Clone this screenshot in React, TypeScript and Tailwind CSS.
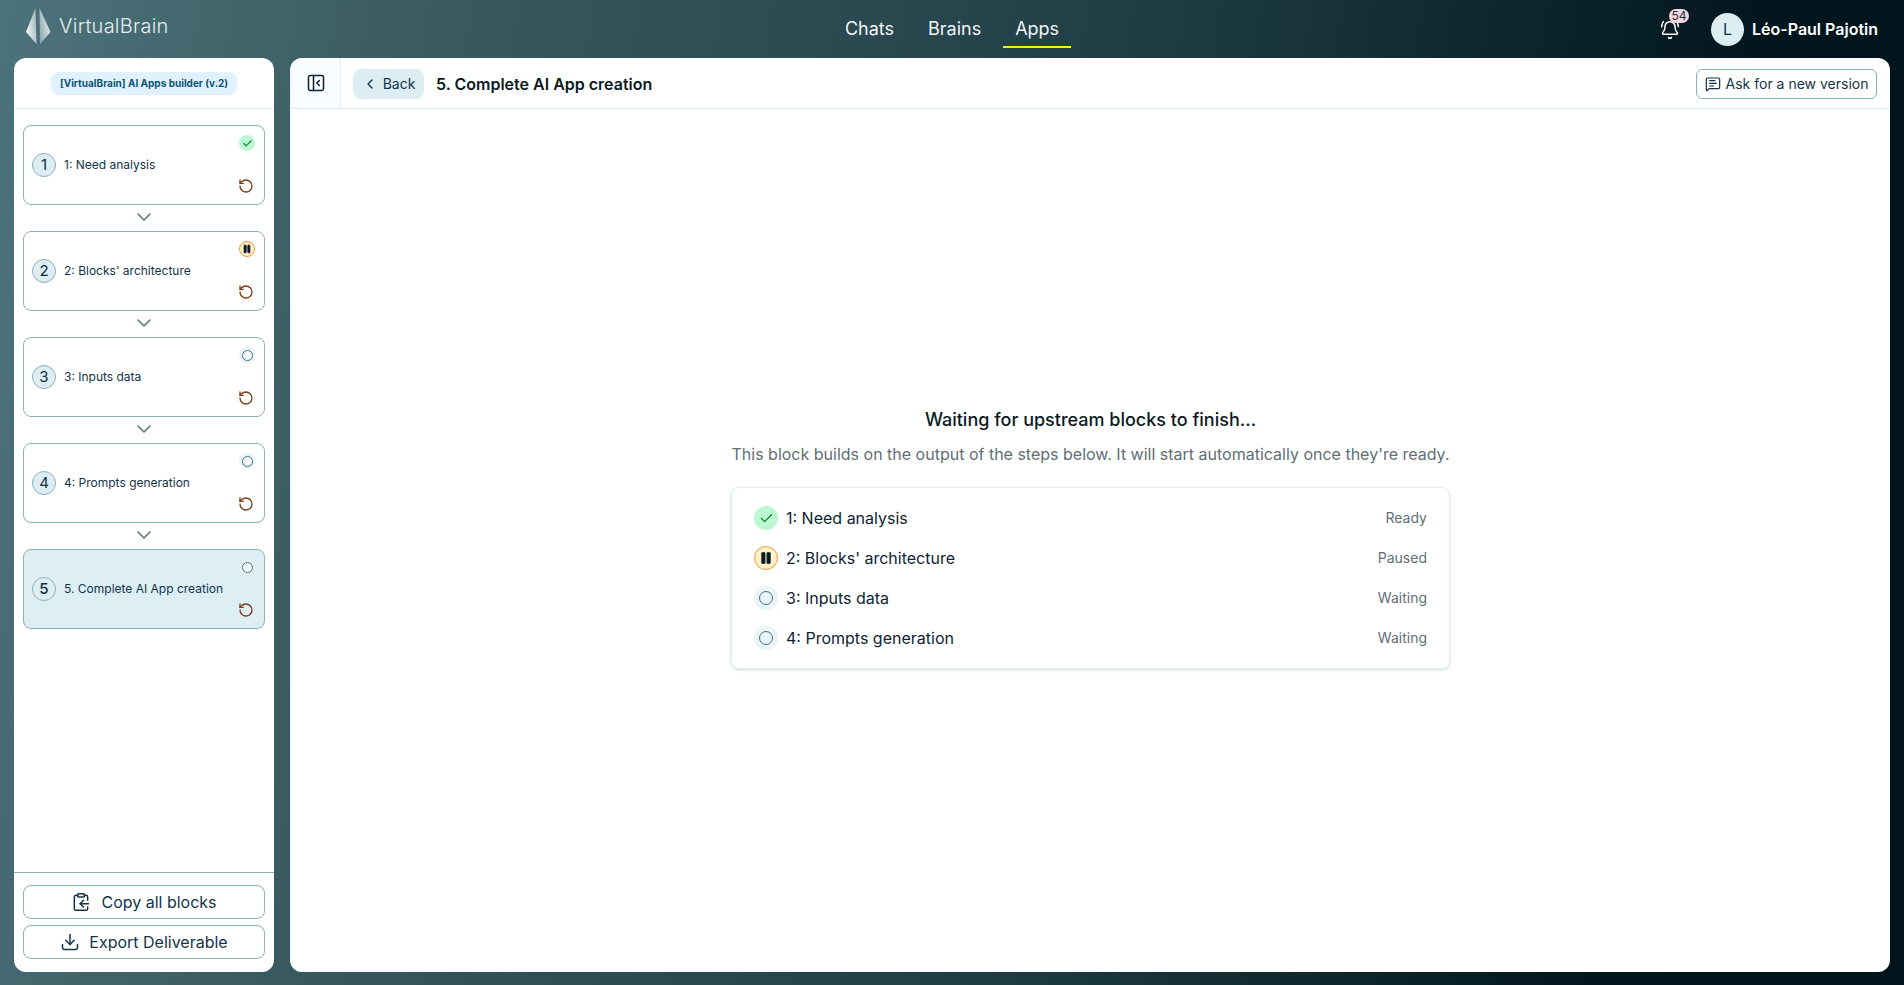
import React from "react";
import {
  BellRing,
  Check,
  ChevronDown,
  ChevronLeft,
  ClipboardCopy,
  Download,
  MessageSquareText,
  PanelLeftClose,
  Pause,
  RotateCcw,
} from "lucide-react";

type Status = "ready" | "paused" | "waiting";

const steps: { n: number; label: string; status: Status; state: string }[] = [
  { n: 1, label: "1: Need analysis", status: "ready", state: "Ready" },
  { n: 2, label: "2: Blocks' architecture", status: "paused", state: "Paused" },
  { n: 3, label: "3: Inputs data", status: "waiting", state: "Waiting" },
  { n: 4, label: "4: Prompts generation", status: "waiting", state: "Waiting" },
];

const StatusSmall = ({ status }: { status: Status }) => {
  if (status === "ready")
    return (
      <div className="w-4 h-4 rounded-full bg-[#bbf7d0] flex items-center justify-center">
        <Check size={11} strokeWidth={2.5} className="text-[#15803d]" />
      </div>
    );
  if (status === "paused")
    return (
      <div className="w-4 h-4 rounded-full bg-[#fef3c7] border border-[#fb923c] flex items-center justify-center">
        <Pause size={10} strokeWidth={2} fill="currentColor" className="text-[#111827]" />
      </div>
    );
  return (
    <div className="w-4 h-4 rounded-full bg-[#e6f2f7] flex items-center justify-center">
      <div className="w-[11px] h-[11px] rounded-full border border-[#47727f] bg-white/60" />
    </div>
  );
};

const StatusLarge = ({ status }: { status: Status }) => {
  if (status === "ready")
    return (
      <div className="w-6 h-6 rounded-full bg-[#bbf7d0] flex items-center justify-center">
        <Check size={15} strokeWidth={2} className="text-[#15803d]" />
      </div>
    );
  if (status === "paused")
    return (
      <div className="w-6 h-6 rounded-full bg-[#fef3c7] border-[1.5px] border-[#fb923c] flex items-center justify-center">
        <Pause size={14} strokeWidth={2} fill="currentColor" className="text-[#0b1a22]" />
      </div>
    );
  return (
    <div className="w-6 h-6 rounded-full bg-[#eaf5fa] flex items-center justify-center">
      <div className="w-[14px] h-[14px] rounded-full border-[1.5px] border-[#47727f]" />
    </div>
  );
};

const StepCard = ({
  n,
  label,
  status,
  active,
}: {
  n: number;
  label: string;
  status: Status;
  active?: boolean;
}) => (
  <div
    className={
      "h-20 rounded-lg border border-[#8fb0b8] flex items-center justify-between pl-2 pr-[9px] " +
      (active ? "bg-[#deeef5]" : "bg-white")
    }
  >
    <div className="flex items-center gap-2">
      <div
        className={
          "w-6 h-6 rounded-full border border-[#8fb0b8] flex items-center justify-center text-[15px] text-[#0d2c3d] " +
          (active ? "font-medium" : "bg-[#ddedf4]")
        }
      >
        {n}
      </div>
      <span className="text-xs text-[#12344a]">{label}</span>
    </div>
    <div className="h-full flex flex-col justify-between items-end pt-[9px] pb-[10px]">
      <StatusSmall status={status} />
      <RotateCcw size={16} strokeWidth={2} className="text-[#7a3e1c] mr-[1px]" />
    </div>
  </div>
);

const Logo = () => (
  <svg width="25" height="36" viewBox="0 0 25 36" fill="none">
    <defs>
      <linearGradient id="shardA" x1="0" y1="0.6" x2="1" y2="0.2">
        <stop offset="0" stopColor="#f6f9f9" />
        <stop offset="1" stopColor="#9db4ba" />
      </linearGradient>
      <linearGradient id="shardB" x1="1" y1="0.2" x2="0" y2="0.7">
        <stop offset="0" stopColor="#f0f4f5" />
        <stop offset="1" stopColor="#8ea9b0" />
      </linearGradient>
    </defs>
    <path d="M9.5 0 L0 24 L10.5 36 Z" fill="url(#shardA)" />
    <path d="M13.5 0 L24.5 24 L14 36 Z" fill="url(#shardB)" />
  </svg>
);

export default function App() {
  return (
    <div className="h-[985px] w-full overflow-hidden flex flex-col bg-[linear-gradient(100deg,#4d737a_0%,#3a5b62_20%,#1f3d45_55%,#02161e_85%,#02141c_100%)] font-['Inter',sans-serif]">
      <header className="h-[58px] shrink-0 grid grid-cols-[1fr_auto_1fr] items-stretch pl-[26px] pr-[26px]">
        <div className="flex items-center gap-2 pb-[6px]">
          <Logo />
          <span className="text-[20px] font-light tracking-[0.25px] text-[#e6edef]">VirtualBrain</span>
        </div>
        <nav className="flex gap-[10px] items-stretch text-lg text-[#f1f5f6]">
          <a className="px-3 pt-[15px]">Chats</a>
          <a className="px-3 pt-[15px]">Brains</a>
          <a className="px-3 pt-[15px] h-[48px] border-b-2 border-[#fdec2e]">Apps</a>
        </nav>
        <div className="flex items-center justify-end gap-2">
          <div className="relative mr-[23px] mt-[1px]">
            <BellRing size={20} strokeWidth={1.8} className="text-white" />
            <span className="absolute -top-[11px] left-[9px] w-5 h-[14px] rounded-full bg-[#fbd5d8] text-xs leading-[14px] text-center text-[#12344a]">
              54
            </span>
          </div>
          <div className="w-[33px] h-[33px] rounded-full bg-[#ddedf4] flex items-center justify-center text-base text-[#12344a]">
            L
          </div>
          <span className="text-base font-semibold text-white">Léo-Paul Pajotin</span>
        </div>
      </header>

      <div className="flex-1 min-h-0 flex gap-4 pl-[14px] pr-[14px] pb-[13px]">
        <aside className="w-[260px] shrink-0 bg-white rounded-xl flex flex-col">
          <div className="h-[51px] shrink-0 border-b border-[#ddedf4] flex items-center justify-center">
            <span className="rounded-lg bg-[#e0f2fe] px-[9px] h-[23px] leading-[23px] text-[10px] font-bold text-[#0c5575]">
              [VirtualBrain] AI Apps builder (v.2)
            </span>
          </div>
          <div className="flex-1 px-[9px] pt-4 flex flex-col">
            {steps.map((s) => (
              <React.Fragment key={s.n}>
                <StepCard n={s.n} label={s.label} status={s.status} />
                <div className="h-[26px] flex items-center justify-center">
                  <ChevronDown size={24} strokeWidth={1.6} className="text-[#5f7278] -mt-[2px]" />
                </div>
              </React.Fragment>
            ))}
            <StepCard n={5} label="5. Complete AI App creation" status="waiting" active />
          </div>
          <div className="border-t border-[#8fb0b8] px-[9px] pt-3 pb-[13px] flex flex-col gap-[6px]">
            <button className="h-[34px] rounded-lg border border-[#8fb0b8] flex items-center justify-center gap-[10px] text-base text-[#12344a]">
              <ClipboardCopy size={20} strokeWidth={1.8} />
              Copy all blocks
            </button>
            <button className="h-[34px] rounded-lg border border-[#8fb0b8] flex items-center justify-center gap-[9px] text-base text-[#12344a]">
              <Download size={20} strokeWidth={1.8} />
              Export Deliverable
            </button>
          </div>
        </aside>

        <main className="flex-1 min-w-0 bg-white rounded-xl border-l border-[#e6f2f7] flex flex-col overflow-hidden">
          <div className="h-[51px] shrink-0 border-b border-[#ddedf4] flex items-center">
            <div className="w-[50px] h-full border-r border-[#ddedf4] bg-[#f8fcfe] flex items-center justify-center">
              <PanelLeftClose size={20} strokeWidth={1.8} className="text-[#0d2230]" />
            </div>
            <button className="ml-3 mt-[1px] h-[30px] w-[71px] rounded-lg bg-[#ddedf4] flex items-center justify-center gap-[5px] text-sm text-[#12344a]">
              <ChevronLeft size={16} strokeWidth={2} />
              Back
            </button>
            <h1 className="ml-3 mt-[1px] text-base font-semibold text-[#0b1a22]">
              5. Complete AI App creation
            </h1>
            <button className="ml-auto mr-[13px] mt-[1px] h-[30px] w-[181px] rounded-md border border-[#8fb0b8] flex items-center justify-center gap-[5px] text-sm text-[#12344a]">
              <MessageSquareText size={16} strokeWidth={1.8} />
              Ask for a new version
            </button>
          </div>
          <div className="flex-1 flex flex-col items-center justify-center pb-[6px]">
            <h2 className="text-lg font-medium leading-7 text-[#0b1a22]">
              Waiting for upstream blocks to finish...
            </h2>
            <p className="mt-2 text-base leading-6 text-[#5f6f76]">
              This block builds on the output of the steps below. It will start automatically once they're ready.
            </p>
            <div className="mt-[21px] w-[719px] rounded-lg border border-[#e3eef3] shadow-[0_1px_3px_rgba(60,100,115,0.25)] px-[22px] py-[18px] flex flex-col gap-4">
              {steps.map((s) => (
                <div key={s.n} className="flex items-center h-6">
                  <StatusLarge status={s.status} />
                  <span className="ml-2 text-base text-[#0f2430]">{s.label}</span>
                  <span className="ml-auto text-sm text-[#5f6f76]">{s.state}</span>
                </div>
              ))}
            </div>
          </div>
        </main>
      </div>
    </div>
  );
}
